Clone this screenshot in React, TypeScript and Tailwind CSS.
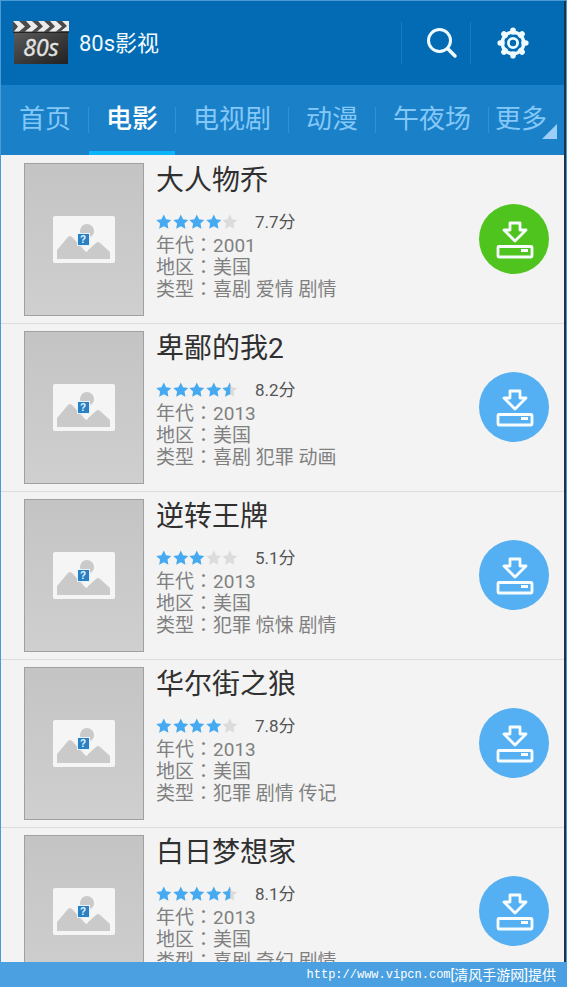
import { useState } from "react";
import clsx from "clsx";

interface Movie {
  title: string;
  stars: number;
  score: string;
  year: string;
  region: string;
  genre: string;
  downloaded?: boolean;
}

const tabs = ["首页", "电影", "电视剧", "动漫", "午夜场"];

const movies: Movie[] = [
  { title: "大人物乔", stars: 4, score: "7.7", year: "2001", region: "美国", genre: "喜剧 爱情 剧情", downloaded: true },
  { title: "卑鄙的我2", stars: 4.5, score: "8.2", year: "2013", region: "美国", genre: "喜剧 犯罪 动画" },
  { title: "逆转王牌", stars: 3, score: "5.1", year: "2013", region: "美国", genre: "犯罪 惊悚 剧情" },
  { title: "华尔街之狼", stars: 4, score: "7.8", year: "2013", region: "美国", genre: "犯罪 剧情 传记" },
  { title: "白日梦想家", stars: 4.5, score: "8.1", year: "2013", region: "美国", genre: "喜剧 奇幻 剧情" },
];

const STAR = "M7.5.6l2.3 4.7 5.2.7-3.8 3.6.9 5.1-4.6-2.4-4.6 2.4.9-5.1L0 6l5.2-.7z";

function Logo() {
  return (
    <svg viewBox="0 0 56 44" className="h-11 w-14" aria-hidden="true">
      <defs>
        <linearGradient id="board" x1="0" y1="0" x2="1" y2="1">
          <stop offset="0" stopColor="#5a5a5a" />
          <stop offset="0.5" stopColor="#3c3c3c" />
          <stop offset="1" stopColor="#222" />
        </linearGradient>
      </defs>
      <rect width="56" height="11" fill="#4a4a4a" />
      <path
        d="M0 0h6l6 5.5-6 5H1l4-5zM13 0h6l6 5.5-6 5h-7l6-5zM25 0h6l6 5.5-6 5h-7l6-5zM37 0h6l6 5.5-6 5h-7l6-5zM49 0h7v10h-8l6-5z"
        fill="#ececec"
      />
      <rect x="1" y="12" width="54" height="31" fill="url(#board)" />
      <path d="M0 11.5h56" stroke="#222" />
      <text x="28" y="35" textAnchor="middle" fontSize="23" fontStyle="italic" fontFamily="Open Sans, sans-serif" fill="#e4e4e4" stroke="#e4e4e4" strokeWidth=".4">
        80s
      </text>
    </svg>
  );
}

function SearchIcon() {
  return (
    <svg viewBox="0 0 32 32" className="size-8" fill="none" stroke="#f0fbff" strokeWidth="3" strokeLinecap="round">
      <circle cx="13.5" cy="13.5" r="11" />
      <path d="M21.5 21.5l7.5 7.5" strokeWidth="3.5" />
    </svg>
  );
}

function GearIcon() {
  return (
    <svg viewBox="0 0 32 32" className="size-8" fill="none" stroke="#f0fbff">
      <circle cx="16" cy="16" r="10.8" strokeWidth="3.4" />
      <circle cx="16" cy="16" r="4.6" strokeWidth="2.8" />
      {[0, 45, 90, 135, 180, 225, 270, 315].map((a) => (
        <path key={a} d="M16 5V3.2" strokeWidth="5.6" strokeLinecap="round" transform={`rotate(${a} 16 16)`} />
      ))}
    </svg>
  );
}

function Stars({ value }: { value: number }) {
  return (
    <div className="flex w-[83px]" role="img" aria-label={`${value} / 5`}>
      {[0, 1, 2, 3, 4].map((i) => (
        <svg key={i} viewBox="0 0 16 16" className="h-4 flex-1">
          <path d={STAR} fill={value >= i + 1 ? "#45aaf0" : "#dcdcdc"} />
          {value === i + 0.5 && (
            <>
              <clipPath id="half">
                <rect width="8" height="16" />
              </clipPath>
              <path d={STAR} fill="#45aaf0" clipPath="url(#half)" />
            </>
          )}
        </svg>
      ))}
    </div>
  );
}

function Poster() {
  return (
    <div className="flex h-[153px] w-[120px] shrink-0 items-center justify-center border border-[#a0a0a0] bg-linear-to-b from-[#c4c4c4] to-[#cfcfcf]">
      <svg viewBox="0 0 62 47" className="h-[47px] w-[62px]" aria-hidden="true">
        <rect width="62" height="47" rx="2" fill="#f5f5f5" />
        <circle cx="34" cy="15" r="7" fill="#cacaca" />
        <path d="M4 43V34l11-13q2-2 4 0l14 15 10-9q2-2 4 0l10 9v7z" fill="#cacaca" />
        <path d="M25 23l12-4 2 8-5 9z" fill="#f5f5f5" />
        <rect x="24" y="17" width="13" height="13" fill="#e4f2fc" />
        <rect x="25" y="18" width="11" height="11" fill="#2a80c0" />
        <text x="30" y="27" textAnchor="middle" fontSize="10" fontWeight="700" fontFamily="Liberation Sans, sans-serif" fill="#e4f6ff">
          ?
        </text>
      </svg>
    </div>
  );
}

function DownloadIcon() {
  return (
    <svg viewBox="0 0 40 40" className="size-10" fill="none" stroke="#f8fdff" strokeWidth="2.8" strokeLinejoin="round">
      <path d="M16 4h10v7h6L21 22 10 11h6z" />
      <rect x="4" y="27.5" width="34" height="10.5" rx="1" />
      <path d="M27 31.5h7" strokeWidth="3" />
    </svg>
  );
}

function Field({ label, value }: { label: string; value: string }) {
  return (
    <div className="flex h-[22px] items-baseline whitespace-pre">
      <dt className="flex items-baseline">
        {label}
        <span className="font-['Noto_Sans_CJK_TC',sans-serif]">：</span>
      </dt>
      <dd>{value}</dd>
    </div>
  );
}

function MovieRow({ movie }: { movie: Movie }) {
  return (
    <li className="flex h-[168px] shrink-0 border-b border-[#dcdcdc] pt-[7px] pr-[15px] pl-[23px]">
      <Poster />
      <div className="ml-3 min-w-0 flex-1">
        <h2 className="mt-0.5 text-[28px] leading-8 text-[#303030]">{movie.title}</h2>
        <div className="mt-3.5 flex h-[22px] items-center gap-4">
          <Stars value={movie.stars} />
          <span className="text-[17px] leading-[22px] text-[#555]">{movie.score}分</span>
        </div>
        <dl className="text-[19px] leading-[22px] text-[#808080]">
          <Field label="年代" value={movie.year} />
          <Field label="地区" value={movie.region} />
          <Field label="类型" value={movie.genre} />
        </dl>
      </div>
      <button
        aria-label={`下载 ${movie.title}`}
        className={clsx(
          "mt-[41px] flex size-[70px] shrink-0 items-center justify-center rounded-full",
          movie.downloaded ? "bg-[#50c41e]" : "bg-[#54b0f2]"
        )}
      >
        <DownloadIcon />
      </button>
    </li>
  );
}

export default function App() {
  const [active, setActive] = useState("电影");

  return (
    <div className="flex h-screen flex-col bg-[#4aa0e0] font-[Roboto,'Noto_Sans_CJK_SC',sans-serif]">
      <div className="flex min-h-0 flex-1 flex-col border-t border-r border-l border-[#4a9ad8]">
        <div className="flex min-h-0 flex-1 flex-col border-r-2 border-[#1d3448] bg-[#f3f3f3]">
          <header className="flex h-[84px] shrink-0 items-center bg-[#026bb4] pr-[9px] pl-3">
            <Logo />
            <h1 className="ml-[10px] flex-1 text-[22px] text-[#f0fbff]">80s影视</h1>
            <button aria-label="搜索" className="flex h-[42px] w-[69px] items-center justify-center border-l border-[#1a7cc2] pl-3">
              <SearchIcon />
            </button>
            <button aria-label="设置" className="flex h-[42px] w-[85px] items-center justify-center border-l border-[#1a7cc2]">
              <GearIcon />
            </button>
          </header>

          <nav className="flex h-[70px] shrink-0 items-center bg-[#1a80c8] pl-px text-[26px] text-[#84c8f8]">
            {tabs.map((tab) => (
              <div key={tab} className="flex h-full items-center">
                <button
                  onClick={() => setActive(tab)}
                  className={clsx(
                    "h-full border-b-4 px-[17px] pt-0.5 whitespace-nowrap",
                    active === tab ? "border-[#0cb4fc] font-medium text-white" : "border-transparent"
                  )}
                >
                  {tab}
                </button>
                <span className="h-[26px] w-px bg-[#3291d4]" />
              </div>
            ))}
            <button className="relative h-full border-b-4 border-transparent px-1.5 pt-0.5 whitespace-nowrap">
              更多
              <svg viewBox="0 0 15 15" className="absolute -right-1 bottom-3 size-[15px]" aria-hidden="true">
                <path d="M15 0v15H0z" fill="#9ccef8" />
              </svg>
            </button>
          </nav>

          <ul className="flex min-h-0 flex-1 flex-col overflow-hidden pt-px">
            {movies.map((movie) => (
              <MovieRow key={movie.title} movie={movie} />
            ))}
          </ul>
        </div>
      </div>

      <footer className="flex h-[25px] shrink-0 items-center justify-end pr-[11px] text-sm text-white">
        <a href="http://www.vipcn.com" className="font-['Liberation_Mono',monospace] text-xs">
          http://www.vipcn.com
        </a>
        <span>[清风手游网]提供</span>
      </footer>
    </div>
  );
}
